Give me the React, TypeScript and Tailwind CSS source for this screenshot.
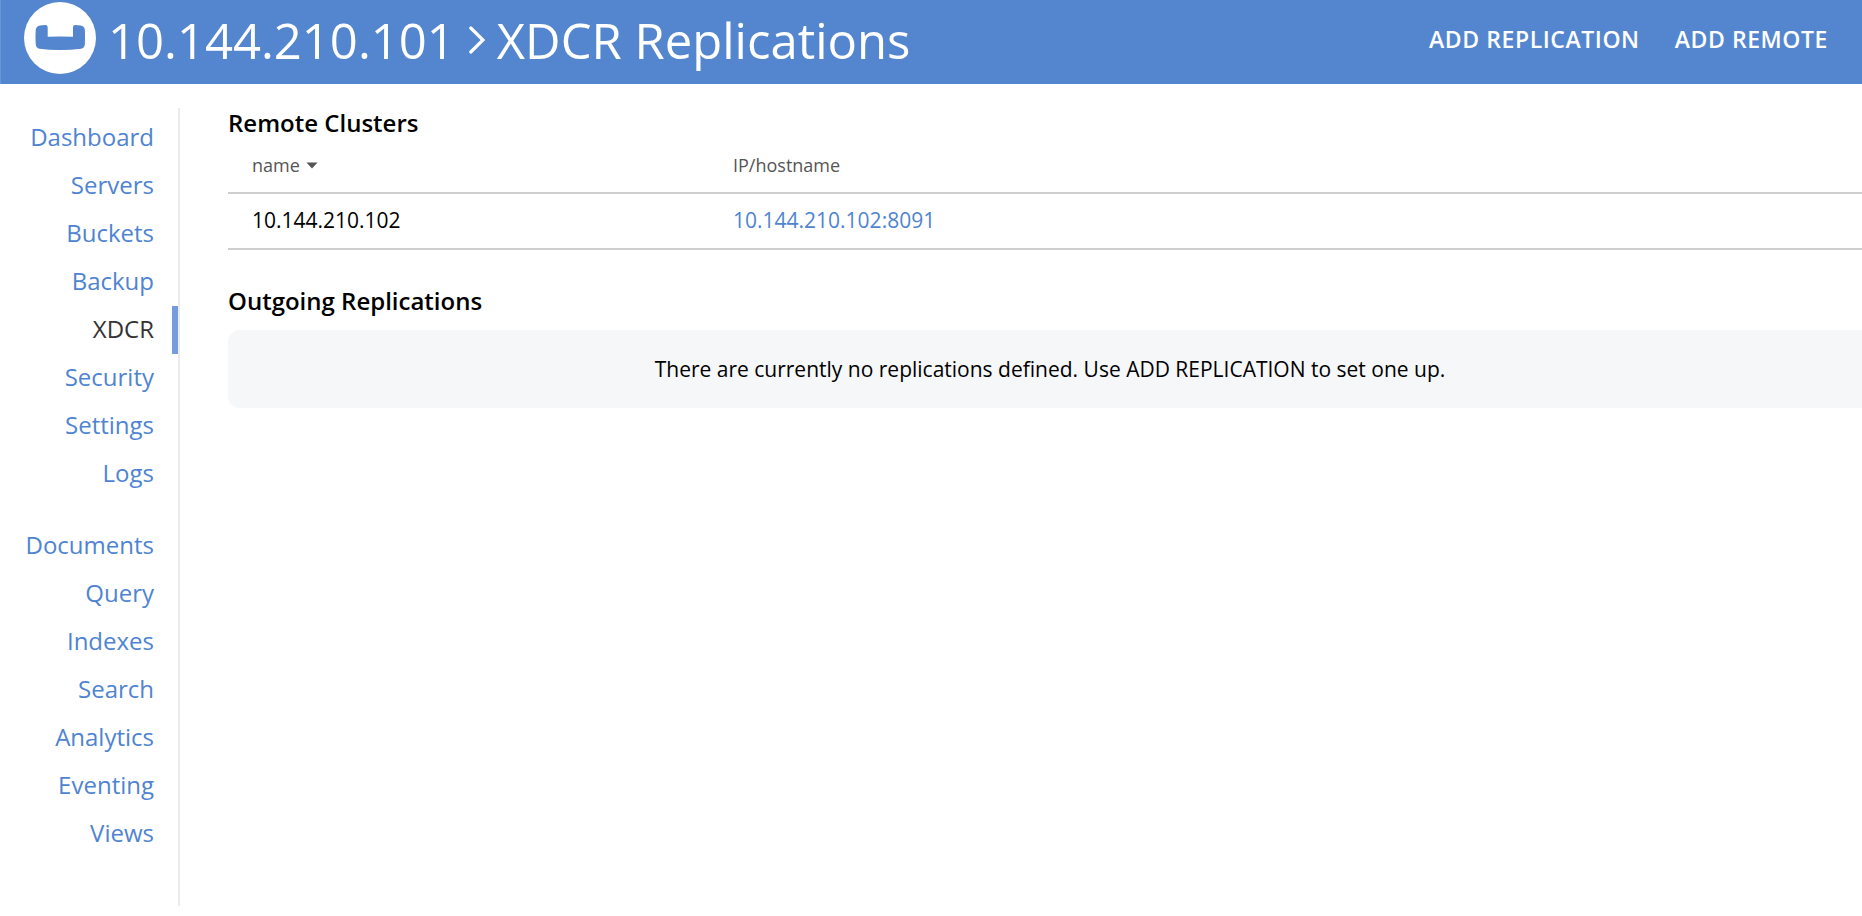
const primaryNav = ["Dashboard", "Servers", "Buckets", "Backup", "XDCR", "Security", "Settings", "Logs"];
const dataNav = ["Documents", "Query", "Indexes", "Search", "Analytics", "Eventing", "Views"];

const remoteClusters = [{ name: "10.144.210.102", hostname: "10.144.210.102:8091" }];

function Logo() {
  return (
    <svg viewBox="0 0 72 72" className="size-18 shrink-0" role="img" aria-label="Couchbase">
      <circle cx="36" cy="36" r="36" fill="#fff" />
      <path
        d="M16 23.4 Q19 23 21.5 23 Q23.7 23 23.7 25.4 V34.8 Q36 34 49 34.8 V25.4 Q49 23 51.2 23 Q54 23 56.8 23.4 Q60.5 24 60.9 28 Q61.2 35 60.9 42 Q60.6 46 57 46.8 Q47 48 36.3 48 Q25 48 15.5 46.8 Q12 46.2 11.7 42 Q11.2 35 11.7 28 Q12.2 24 16 23.4 Z"
        fill="#5486cf"
      />
    </svg>
  );
}

function NavGroup({ items, active }: { items: string[]; active?: string }) {
  return (
    <ul>
      {items.map((item) => (
        <li key={item}>
          <a
            href="#"
            aria-current={item === active ? "page" : undefined}
            className={
              item === active
                ? "flex h-12 items-center justify-end border-r-6 border-[#759ddb] pr-[18px] pb-0.5 text-[#333333]"
                : "flex h-12 items-center justify-end pr-6 pb-0.5 text-[#4f84d1]"
            }
          >
            {item}
          </a>
        </li>
      ))}
    </ul>
  );
}

export default function App() {
  return (
    <div className="min-h-screen overflow-hidden bg-white font-['Open_Sans',sans-serif] text-black">
      <header className="flex h-21 items-center justify-between border-l border-[#6a96d6] bg-[#5486cf] pr-[34px] pl-[23px] text-white">
        <div className="flex items-center gap-3 pb-2">
          <Logo />
          <h1 className="flex items-center pt-1 text-[49px] leading-12">
            <span>10.144.210.101</span>
            <svg viewBox="0 0 16 28" className="mr-3 ml-3.5 h-7 w-4" fill="none" stroke="#fff" strokeWidth="3.2" aria-hidden="true">
              <path d="M1.8 2 L14 14 L1.8 26" strokeLinecap="round" />
            </svg>
            <span>XDCR Replications</span>
          </h1>
        </div>
        <div className="flex items-center gap-[35px] pb-1.5 text-[23px] font-semibold tracking-wide">
          <button type="button">ADD REPLICATION</button>
          <button type="button">ADD REMOTE</button>
        </div>
      </header>

      <div className="flex items-start pt-6">
        <nav className="flex w-45 shrink-0 flex-col gap-6 border-r-2 border-[#ebebeb] pt-1.5 pb-12 text-2xl">
          <NavGroup items={primaryNav} active="XDCR" />
          <NavGroup items={dataNav} />
        </nav>

        {/* content runs past the right edge of the window */}
        <main className="-mr-2.5 min-w-0 flex-1 pl-12">
          <section>
            <h2 className="text-2xl leading-[30px] font-semibold">Remote Clusters</h2>
            <table className="w-full table-fixed border-collapse text-left">
              <thead>
                <tr className="h-[55px] border-b-2 border-[#cecece] text-lg text-[#555555]">
                  <th className="w-[481px] pl-6 font-normal">
                    <button type="button" className="flex items-center gap-1.5">
                      name
                      <svg viewBox="0 0 12 7" className="h-[7px] w-3" fill="#555555" aria-hidden="true">
                        <path d="M0.5 0.5 H11.5 L6 6.5 Z" />
                      </svg>
                    </button>
                  </th>
                  <th className="pl-6 font-normal">IP/hostname</th>
                </tr>
              </thead>
              <tbody>
                {remoteClusters.map((cluster) => (
                  <tr key={cluster.name} className="h-14 border-b-2 border-[#cecece] text-[21px]">
                    <td className="pl-6">{cluster.name}</td>
                    <td className="pl-6">
                      <a href="#" className="text-[#4f84d1]">
                        {cluster.hostname}
                      </a>
                    </td>
                  </tr>
                ))}
              </tbody>
            </table>
          </section>

          <section className="pt-9">
            <h2 className="pb-3.5 text-2xl leading-[30px] font-semibold">Outgoing Replications</h2>
            <p className="rounded-xl bg-[#f5f7f9] py-6 text-center text-[21px] leading-[30px]">
              There are currently no replications defined. Use ADD REPLICATION to set one up.
            </p>
          </section>
        </main>
      </div>
    </div>
  );
}
